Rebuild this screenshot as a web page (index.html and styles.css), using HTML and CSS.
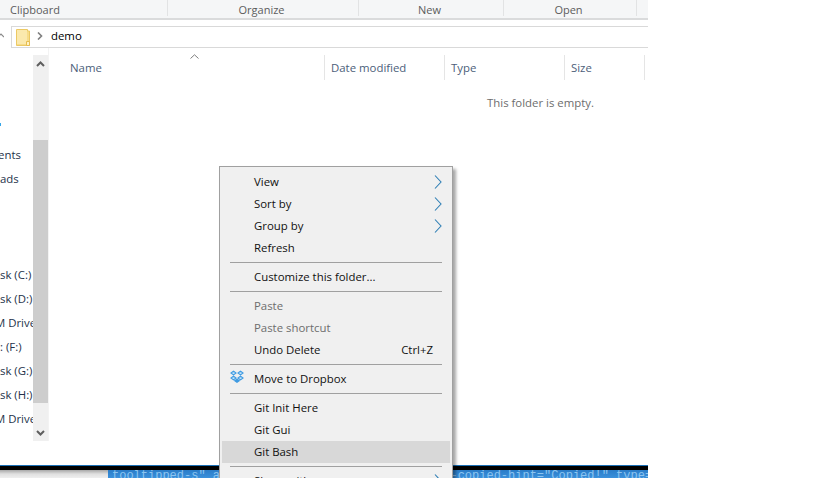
FILE: index.html
```html
<!DOCTYPE html>
<html>
    <head>
        <link rel="stylesheet" href="styles.css">
    </head>
    <body>
        <div class="window">
            <div class="ribbon">
                <div class="group clipboard">Clipboard</div>
                <div class="group organize">Organize</div>
                <div class="group new">New</div>
                <div class="group open">Open</div>
            </div>
            <div class="nav">
                <svg class="up" width="4" height="6" viewBox="0 0 4 6"><path d="M-2 5 L1 2 L4 5" fill="none" stroke="#8a8a8a" stroke-width="1.2"/></svg>
                <div class="address">
                    <svg class="folder" width="14" height="17" viewBox="0 0 14 17">
                        <path d="M.5 .5H11.5V2H13.5V16.5H.5Z" fill="#f6dc8a" stroke="#ecc964"/>
                        <path d="M1 1H11V15H1Z" fill="#fbe9ad"/>
                        <path d="M10.5 12.5H13.5V16.5H10.5Z" fill="#fff2c6" stroke="#e6bd50"/>
                    </svg>
                    <svg class="crumb" width="6" height="8" viewBox="0 0 6 8"><path d="M1 0.5L4.5 4L1 7.5" fill="none" stroke="#7f7f7f" stroke-width="1.6"/></svg>
                    <span class="crumb-text">demo</span>
                </div>
            </div>
            <div class="main">
                <div class="tree">
                    <div class="tree-items">
                        <i class="tree-mark"></i>
                        <div class="tree-row first">ents</div>
                        <div class="tree-row">ads</div>
                        <div class="tree-row gap">sk (C:)</div>
                        <div class="tree-row">sk (D:)</div>
                        <div class="tree-row clipped">M Drive</div>
                        <div class="tree-row">: (F:)</div>
                        <div class="tree-row">sk (G:)</div>
                        <div class="tree-row">sk (H:)</div>
                        <div class="tree-row clipped">M Drive</div>
                    </div>
                    <div class="scrollbar">
                        <div class="scroll-btn">
                            <svg width="9" height="6" viewBox="0 0 9 6"><path d="M1 5L4.5 1.5L8 5" fill="none" stroke="#5f5f5f" stroke-width="2"/></svg>
                        </div>
                        <div class="scroll-space"></div>
                        <div class="scroll-thumb"></div>
                        <div class="scroll-btn down">
                            <svg width="9" height="6" viewBox="0 0 9 6"><path d="M1 1L4.5 4.5L8 1" fill="none" stroke="#5f5f5f" stroke-width="2"/></svg>
                        </div>
                    </div>
                </div>
                <div class="files">
                    <div class="headers">
                        <div class="col name">Name
                            <svg class="sort" width="9" height="5" viewBox="0 0 9 5"><path d="M.5 4.5L4.5 .8L8.5 4.5" fill="none" stroke="#7d7d7d"/></svg>
                        </div>
                        <div class="col date">Date modified</div>
                        <div class="col type">Type</div>
                        <div class="col size">Size</div>
                    </div>
                    <div class="empty">This folder is empty.</div>
                </div>
            </div>
        </div>
        <div class="taskbar">
            <div class="selected-text">tooltipped-s" aria-label="Cop" class="btn" data-copied-hint="Copied!" type=</div>
        </div>

        <div class="menu">
            <div class="item">View<svg class="arrow" width="8" height="14" viewBox="0 0 8 14"><path d="M1 .5L7 7L1 13.5" fill="none" stroke="#2f7fb5" stroke-width="1.1"/></svg></div>
            <div class="item">Sort by<svg class="arrow" width="8" height="14" viewBox="0 0 8 14"><path d="M1 .5L7 7L1 13.5" fill="none" stroke="#2f7fb5" stroke-width="1.1"/></svg></div>
            <div class="item">Group by<svg class="arrow" width="8" height="14" viewBox="0 0 8 14"><path d="M1 .5L7 7L1 13.5" fill="none" stroke="#2f7fb5" stroke-width="1.1"/></svg></div>
            <div class="item">Refresh</div>
            <div class="sep"></div>
            <div class="item">Customize this folder...</div>
            <div class="sep"></div>
            <div class="item off">Paste</div>
            <div class="item off">Paste shortcut</div>
            <div class="item">Undo Delete<span class="key">Ctrl+Z</span></div>
            <div class="sep"></div>
            <div class="item">
                <svg class="dropbox" width="14" height="13" viewBox="0 0 14 13">
                    <path d="M3.5 .5L7 3L3.5 5.5L0 3ZM10.5 .5L14 3L10.5 5.5L7 3ZM3.5 5.5L7 8L3.5 10.5L0 8ZM10.5 5.5L14 8L10.5 10.5L7 8ZM3.7 10.8L7 8.6L10.3 10.8L7 13Z" fill="#3f9be2"/>
                    <path d="M3.5 2.2L5.3 3L3.5 3.9L1.7 3ZM10.5 2.2L12.3 3L10.5 3.9L8.7 3ZM3.5 7.2L5.3 8L3.5 8.9L1.7 8ZM10.5 7.2L12.3 8L10.5 8.9L8.7 8Z" fill="#d5ecfb"/>
                </svg>
                Move to Dropbox
            </div>
            <div class="sep"></div>
            <div class="item">Git Init Here</div>
            <div class="item">Git Gui</div>
            <div class="item hover">Git Bash</div>
            <div class="sep"></div>
            <div class="item">Share with<svg class="arrow" width="8" height="14" viewBox="0 0 8 14"><path d="M1 .5L7 7L1 13.5" fill="none" stroke="#2f7fb5" stroke-width="1.1"/></svg></div>
        </div>
    </body>
</html>
```

FILE: styles.css
```css
*{
    margin: 0;
    padding: 0;
    box-sizing: border-box;
}
html, body{
    height: 100%;
    overflow: hidden;
}
body{
    background: #fff;
    font-family: 'Open Sans', 'Noto Sans', sans-serif;
    font-size: 11.4px;
    color: #1a1a1a;
    position: relative;
}
.window{
    width: 648px;
    height: 465px;
    background: #fff;
    display: flex;
    flex-direction: column;
}
.ribbon{
    height: 20px;
    display: flex;
    background: #f5f6f7;
    border-bottom: 2px solid #dadbdc;
    color: #5c5c5c;
    font-size: 11px;
    line-height: 19px;
}
.group{
    text-align: center;
    height: 16px;
    line-height: 20px;
    padding-right: 3px;
    border-right: 1px solid #e2e3e4;
}
.clipboard{
    width: 168px;
    text-align: left;
    padding-left: 10px;
}
.organize{
    width: 191px;
}
.new{
    width: 145px;
}
.open{
    width: 133px;
}
.nav{
    height: 28px;
    display: flex;
    align-items: flex-start;
    padding-top: 6px;
}
.up{
    width: 4px;
    margin-right: 7px;
    margin-top: 6px;
}
.address{
    flex: 1;
    height: 22px;
    border: 1px solid #d9d9d9;
    border-right: 0;
    display: flex;
    align-items: center;
    color: #000;
}
.folder{
    margin-left: 4px;
    margin-top: 1px;
}
.crumb{
    margin-left: 7px;
    margin-right: 8px;
    margin-bottom: 3px;
}
.crumb-text{
    margin-bottom: 3px;
}
.main{
    flex: 1;
    display: flex;
    min-height: 0;
}
.tree{
    width: 49px;
    display: flex;
    padding-top: 7px;
    height: 393px;
    border-right: 1px solid #f3f3f3;
}
.tree-items{
    width: 33px;
    overflow: hidden;
    white-space: nowrap;
    color: #24324a;
    position: relative;
}
.tree-mark{
    position: absolute;
    left: 0;
    top: 68px;
    width: 1px;
    height: 3px;
    background: #35a6e8;
}
.tree-row{
    height: 24px;
    line-height: 24px;
}
.tree-row.first{
    margin-top: 88px;
    margin-left: -2px;
}
.tree-row.gap{
    margin-top: 72px;
}
.tree-row.clipped{
    margin-left: -5px;
}
.scrollbar{
    width: 15px;
    height: 386px;
    background: #f0f0f0;
    display: flex;
    flex-direction: column;
}
.scroll-btn{
    height: 17px;
    display: flex;
    align-items: center;
    justify-content: center;
}
.scroll-btn.down{
    margin-top: auto;
    height: 20px;
    padding-top: 3px;
}
.scroll-space{
    height: 68px;
}
.scroll-thumb{
    height: 263px;
    background: #cdcdcd;
}
.files{
    flex: 1;
    min-width: 0;
}
.headers{
    display: flex;
    height: 25px;
    margin-top: 7px;
    color: #4c607a;
}
.col{
    height: 25px;
    line-height: 25px;
    border-right: 1px solid #e5e5e5;
    padding-left: 6px;
    position: relative;
}
.name{
    width: 276px;
    padding-left: 21px;
}
.date, .type{
    width: 120px;
}
.size{
    width: 80px;
}
.sort{
    position: absolute;
    left: 141px;
    top: -1px;
}
.empty{
    margin-top: 15px;
    padding-left: 438px;
    color: #6d6d6d;
    line-height: 16px;
}
.taskbar{
    width: 648px;
    height: 13px;
    border-top: 1px solid #1a6fb5;
    background: linear-gradient(#000 0 4px, #a8a8a8 4px, #e0e0e0 8px, #f2f2f2 13px);
    position: relative;
    overflow: hidden;
}
.selected-text{
    position: absolute;
    left: 108px;
    right: 0;
    top: 4px;
    height: 10px;
    padding-left: 4px;
    background: linear-gradient(#2a7cc8, #3f95e0);
    color: #8cc4ef;
    font-family: 'Liberation Mono', monospace;
    font-size: 12px;
    line-height: 12px;
    white-space: nowrap;
    overflow: hidden;
}
.menu{
    position: absolute;
    left: 219px;
    top: 166px;
    width: 234px;
    height: 330px;
    background: #f0f0f0;
    border: 1px solid #a0a0a0;
    box-shadow: 3px 3px 3px rgba(0,0,0,.35);
    padding: 4px 2px 0;
    color: #111;
}
.item{
    height: 22px;
    line-height: 22px;
    padding-left: 32px;
    position: relative;
}
.item.off{
    color: #6d6d6d;
}
.item.hover{
    background: #d8d8d8;
}
.key{
    position: absolute;
    right: 17px;
    top: 0;
}
.arrow{
    position: absolute;
    right: 8px;
    top: 4px;
}
.dropbox{
    position: absolute;
    left: 8px;
    top: 2px;
}
.sep{
    height: 1px;
    margin: 3px 8px 3px 8px;
    background: #a0a0a0;
}
```
